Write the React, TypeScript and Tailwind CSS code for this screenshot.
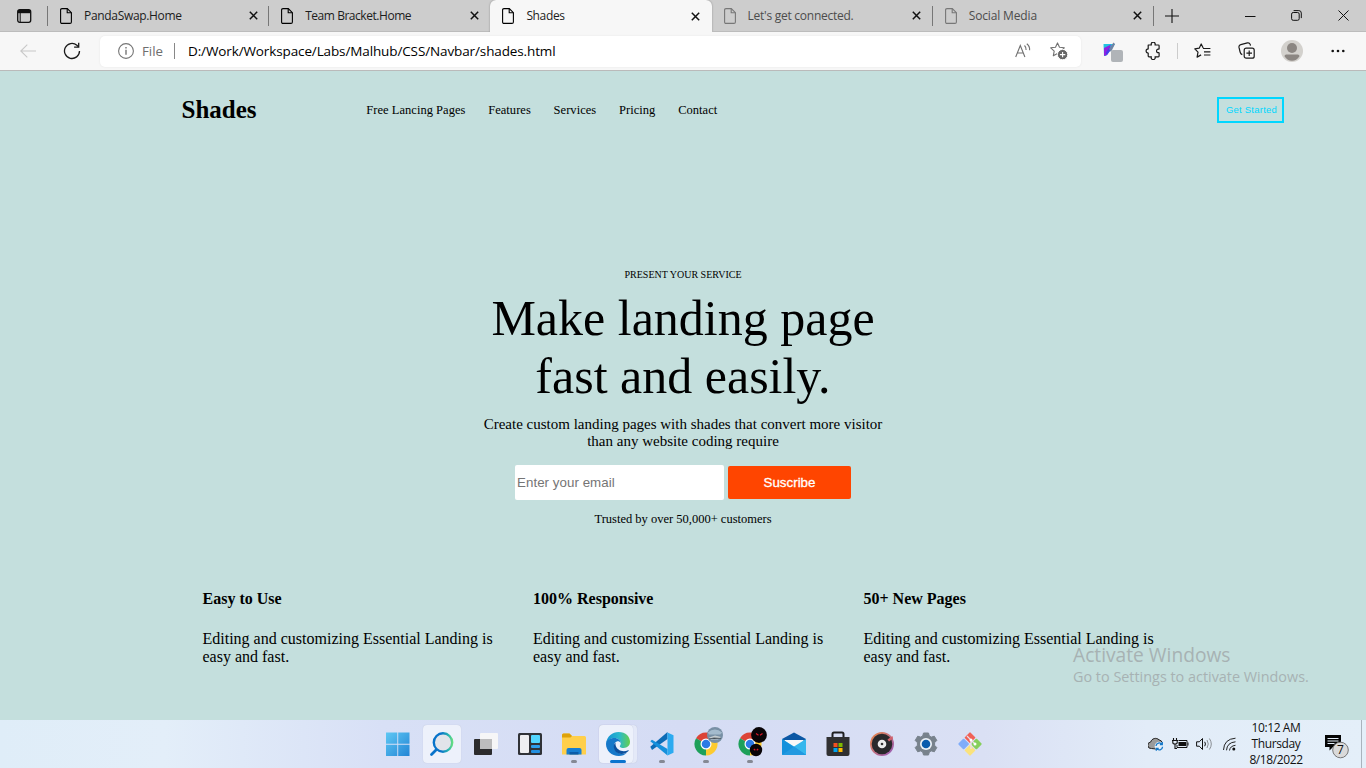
import type { ReactNode } from "react";

const UI = "font-['Open_Sans','Noto_Sans',sans-serif]";
const SERIF = "font-['Liberation_Serif',serif]";
const ARIAL = "font-['Liberation_Sans',sans-serif]";

function PageIcon() {
  return (
    <svg width="12" height="16" viewBox="0 0 12 16" fill="none" stroke="currentColor" strokeWidth="1.1">
      <path d="M2 .6h5.3l4.1 4.1V14q0 1.4-1.4 1.4H2Q.6 15.4.6 14V2Q.6.6 2 .6Z" />
      <path d="M7.2.8v4h4" />
    </svg>
  );
}

function CloseIcon() {
  return (
    <svg width="9" height="9" viewBox="0 0 9 9" stroke="#111" strokeWidth="1.5">
      <path d="m.8.8 7.4 7.4M8.2.8.8 8.2" />
    </svg>
  );
}

type TabProps = { title: string; track: string; active?: boolean; dim?: boolean; line?: boolean };

function Tab({ title, track, active, dim, line }: TabProps) {
  return (
    <div
      className={`flex h-8 w-[221.2px] shrink-0 items-center pl-[12px] pr-[11.5px] ${
        active ? "rounded-t-[6px] bg-[#f7f7f7] shadow-[0_0_2px_#888]" : "border-b border-[#bcbcbc]"
      }`}
    >
      <span className={dim ? "text-[#777]" : "text-black"}>
        <PageIcon />
      </span>
      <span className={`ml-[12px] flex-1 whitespace-nowrap text-[12px] ${track} ${dim ? "text-[#4c4c4c]" : "text-[#1c1c1c]"}`}>
        {title}
      </span>
      <CloseIcon />
      {line ? <span className="ml-[10.5px] -mr-[11.5px] h-5 w-px bg-[#777]" /> : null}
    </div>
  );
}

function TabBar() {
  return (
    <div className="flex h-8 bg-[#cdcdcd]">
      <div className="flex w-12 shrink-0 items-center border-b border-[#bcbcbc] pl-[17px]">
        <svg width="15" height="14" viewBox="0 0 15 14">
          <rect x=".7" y=".7" width="13" height="12.6" rx="2" fill="none" stroke="#111" strokeWidth="1.3" />
          <path d="M1 1h12.6v3.2H1Z" fill="#111" />
          <path d="M3.2 4v9" stroke="#111" strokeWidth="1" />
        </svg>
        <span className="ml-[15px] h-5 w-px bg-[#777]" />
      </div>
      <Tab title="PandaSwap.Home" track="tracking-[-0.32px]" line />
      <Tab title="Team Bracket.Home" track="tracking-[-0.46px]" />
      <Tab title="Shades" track="tracking-[-0.35px]" active />
      <Tab title="Let's get connected." track="tracking-[-0.26px]" dim line />
      <Tab title="Social Media" track="tracking-[-0.15px]" dim line />
      <div className="flex flex-1 items-center border-b border-[#bcbcbc] pl-[11px]">
        <svg width="14" height="14" viewBox="0 0 14 14" stroke="#111" strokeWidth="1.1">
          <path d="M7 0v14M0 7h14" />
        </svg>
        <svg className="ml-[66px]" width="11" height="10" viewBox="0 0 11 10" stroke="#111">
          <path d="M0 5.5h10.5" />
        </svg>
        <svg className="ml-[35px]" width="11" height="11" viewBox="0 0 11 11" fill="none" stroke="#111">
          <rect x=".6" y="2.5" width="7.6" height="7.8" rx="1.6" />
          <path d="M2.6.6h5.2q2.5 0 2.5 2.5v5" />
        </svg>
        <svg className="ml-[36px]" width="11" height="11" viewBox="0 0 11 11" stroke="#111">
          <path d="m.5.5 10 10M10.5.5l-10 10" />
        </svg>
      </div>
    </div>
  );
}

const STAR = "M7.5.9 9.5 5.2l4.8.6-3.5 3.3.9 4.7-4.2-2.3-4.2 2.3.9-4.7L.7 5.8l4.8-.6Z";

function Toolbar() {
  return (
    <div className="flex h-[39px] items-center border-b border-[#bababa] bg-[#f7f7f7]">
      <svg className="ml-[20px]" width="16" height="14" viewBox="0 0 16 14" fill="none" stroke="#c8c8c8" strokeWidth="1.1">
        <path d="M16 7H1M7.3.6.8 7l6.5 6.4" />
      </svg>
      <svg className="ml-[27px]" width="18" height="18" viewBox="0 0 18 18" fill="none" stroke="#1a1a1a" strokeWidth="1.3">
        <path d="M16.5 9a7.5 7.5 0 1 1-2.6-5.7l1.6 1.6" />
        <path d="M15.7.8v4.4h-4.6" />
      </svg>
      <div className="ml-[19px] flex h-[31px] w-[981px] shrink-0 items-center rounded-[5px] bg-white pl-[18px] shadow-[0_0_2px_#e3e3e3]">
        <svg width="16" height="16" viewBox="0 0 16 16" fill="none" stroke="#757575" strokeWidth="1.1">
          <circle cx="8" cy="8" r="7.4" />
          <path d="M8 6.8v5" strokeWidth="1.4" />
          <path d="M8 3.9v1.5" strokeWidth="1.4" />
        </svg>
        <span className="ml-[8px] w-[32px] pt-px text-[13.3px] text-[#6e6e6e]">File</span>
        <span className="h-4 w-px bg-[#888]" />
        <span className="ml-[13px] flex-1 whitespace-nowrap pt-px text-[13.5px] tracking-[-0.12px] text-black">
          D:/Work/Workspace/Labs/Malhub/CSS/Navbar/shades.html
        </span>
        <svg width="16" height="16" viewBox="0 0 16 16" fill="none" stroke="#707070" strokeWidth="1.1">
          <path d="M.7 14 5.3 2.5 9.900 14M2.400 10h5.800" />
          <path d="M9.500 2.500q1.800 1.800 1.600 4.500M11.800.8q3.200 2.600 2.800 6.400" />
        </svg>
        <svg className="ml-[19px] mr-[13px]" width="18" height="18" viewBox="0 0 18 18" fill="none">
          <path d={STAR} stroke="#707070" strokeWidth="1.1" strokeLinejoin="round" />
          <circle cx="12.6" cy="12.6" r="5.2" fill="#666" stroke="#fff" />
          <path d="M12.6 9.9v5.4M9.9 12.6h5.4" stroke="#fff" strokeWidth="1.1" />
        </svg>
      </div>
      <svg className="ml-[21px] mt-[4px]" width="22" height="22" viewBox="0 0 22 22">
        <path d="M1.500 2h11.500L9 8l-5 6H2Z" fill="#20c4e0" />
        <path d="m2 6 7-3.500L5 13l-3 1Z" fill="#9022e0" />
        <path d="m3.500 11 4-6 2.500 1-5 7Z" fill="#4b38ed" />
        <path d="m7 7 4.500-6.500 1.500 1.500L9 10Z" fill="#7083a3" />
        <rect x="9" y="8" width="12" height="12" rx="2" fill="#b0b4b8" />
      </svg>
      <svg className="ml-[21px]" width="16" height="18" viewBox="0 0 16 18" fill="none" stroke="#1a1a1a" strokeWidth="1.2" strokeLinejoin="round">
        <path d="M3.200 3h3.200a2 2 0 1 1 3.600 0h3.300q.8 0 .8.800v2.900a.5.500 0 0 1-.6.500c-2.600-.5-2.600 3.900 0 3.400a.5.500 0 0 1 .6.500v2.900q0 .8-.8.800h-3.300a2 2 0 1 1-3.600 0H4q-.8 0-.8-.8v-2.900a2.100 2.100 0 1 1 0-4.200Z" />
      </svg>
      <span className="ml-[16px] h-4 w-px bg-[#ccc]" />
      <svg className="ml-[16px]" width="17" height="16" viewBox="0 0 17 16" fill="none" stroke="#1a1a1a" strokeWidth="1.2" strokeLinejoin="round">
        <path d="M9.200 5 7.200 1 5.200 5.200.8 5.900 4 9.100l-.9 5 4-2.200" />
        <path d="M9 5.500h7.400M10 8.800h6.400M10 12h6.400" />
      </svg>
      <svg className="ml-[27px]" width="18" height="18" viewBox="0 0 18 18" fill="none" stroke="#1a1a1a" strokeWidth="1.2">
        <rect x="6.200" y="6.200" width="10" height="10" rx="2" />
        <path d="M11.200 8.400v5.600M8.400 11.200H14M4.300 12.600Q2.600 12 2.100 10L1 5.400q-.4-2.100 1.800-2.700l6.600-1.800q2.100-.4 2.800 1.500l.3 1.200" />
      </svg>
      <svg className="ml-[25px]" width="22" height="22" viewBox="0 0 22 22">
        <circle cx="11" cy="11" r="11" fill="#d3d1cd" />
        <circle cx="11" cy="8" r="5" fill="#8b8682" />
        <path d="M3.500 16.300Q3.500 14.500 5.300 14.500H16.700Q18.500 14.500 18.500 16.300Q15.500 20.800 11 20.800T3.500 16.300Z" fill="#8b8682" />
      </svg>
      <svg className="ml-[28px]" width="14" height="4" viewBox="0 0 14 4" fill="#111">
        <circle cx="1.700" cy="2" r="1.300" />
        <circle cx="7" cy="2" r="1.300" />
        <circle cx="12.300" cy="2" r="1.300" />
      </svg>
    </div>
  );
}

const FEATURES = ["Easy to Use", "100% Responsive", "50+ New Pages"];

function Page() {
  return (
    <main className={`flex h-[649px] flex-col bg-[#c4dfdd] text-black ${SERIF}`}>
      <nav className="flex h-[78px] items-center pl-[181.5px] pr-[82px]">
        <span className="w-[184.8px] text-[25px] font-bold leading-[28px]">Shades</span>
        <div className="flex flex-1 gap-[22.8px] whitespace-nowrap text-[12.5px] leading-[14px] tracking-[0.03px]">
          <a>Free Lancing Pages</a>
          <a>Features</a>
          <a>Services</a>
          <a>Pricing</a>
          <a>Contact</a>
        </div>
        <button className={`h-[26px] w-[67px] whitespace-nowrap border-2 border-[#00d7ff] pl-[2px] text-[9.5px] leading-none tracking-[0.24px] text-[#00d7ff] ${ARIAL}`}>
          Get Started
        </button>
      </nav>
      <section className="mt-[120px] flex flex-col items-center text-center">
        <p className="text-[10px] leading-[11px]">PRESENT YOUR SERVICE</p>
        <h1 className="mt-[9px] text-[50px] leading-[58px]">
          Make landing page
          <br />
          fast and easily.
        </h1>
        <p className="mt-[11px] text-[15px] leading-[17px]">
          Create custom landing pages with shades that convert more visitor
          <br />
          than any website coding require
        </p>
        <div className={`mt-[15px] flex items-center gap-1 ${ARIAL}`}>
          <input
            className="h-[35px] w-[209px] rounded-[2px] bg-white pl-[2px] text-[13.333px] tracking-[0.04px] placeholder:text-[#757575]"
            placeholder="Enter your email"
          />
          <button className="h-[33px] w-[123px] rounded-[2px] bg-[#ff4500] text-[13.333px] text-white [-webkit-text-stroke:0.3px_white]">
            Suscribe
          </button>
        </div>
        <p className="mt-[12px] text-[12.5px] leading-[14px]">Trusted by over 50,000+ customers</p>
      </section>
      <section className="mt-[64px] flex pl-[202.5px] text-[16px] leading-[18px]">
        {FEATURES.map((title) => (
          <div key={title} className="w-[330.5px]">
            <h3 className="font-bold">{title}</h3>
            <p className="mt-[22px] whitespace-nowrap">
              Editing and customizing Essential Landing is
              <br />
              easy and fast.
            </p>
          </div>
        ))}
      </section>
    </main>
  );
}

function Slot({ children, dot, boxed }: { children: ReactNode; dot?: boolean; boxed?: boolean }) {
  return (
    <div
      className={`relative mx-[3px] flex h-[38px] w-[38px] shrink-0 items-center justify-center rounded-[4px] ${
        boxed ? "bg-[#edf1fb] shadow-[0_0_1px_#b5bbcf]" : ""
      }`}
    >
      {children}
      {dot ? <span className="absolute bottom-0 left-[16px] h-[3px] w-[6px] rounded-full bg-[#858994]" /> : null}
    </div>
  );
}

function ChromeMark() {
  return (
    <>
      <path d="M12 17 2.040 11.250A11.500 11.500 0 0 1 21.960 11.250Z" fill="#dc4437" />
      <path d="M12 17 2.040 11.250A11.500 11.500 0 0 0 12 28.500Z" fill="#1da05a" />
      <path d="M12 17 12 28.500A11.500 11.500 0 0 0 21.960 11.250Z" fill="#fdcb2f" />
      <circle cx="12" cy="17" r="5.500" fill="#fff" />
      <circle cx="12" cy="17" r="4.300" fill="#2c7be5" />
    </>
  );
}

function Taskbar() {
  return (
    <footer className="flex h-12 items-center bg-[linear-gradient(90deg,#dfedf8_0%,#e3eef9_12%,#d8e0f6_28%,#d5dcf4_50%,#dae0f4_72%,#e2ecf8_84%,#e4eff9_100%)]">
      <div className="flex w-[1148px] pl-[376px]">
        <Slot>
          <svg width="24" height="24" viewBox="0 0 24 24">
            <defs>
              <linearGradient id="win" x2="1" y2="1" gradientUnits="objectBoundingBox">
                <stop stopColor="#5fc8f4" />
                <stop offset="1" stopColor="#2385d5" />
              </linearGradient>
            </defs>
            <path d="M0 .500h11.300v11.300H0Zm12.200 0h11.300v11.300h-11.300Zm-12.200 12.200h11.300V24H0Zm12.200 0h11.300V24h-11.300Z" fill="url(#win)" />
          </svg>
        </Slot>
        <Slot boxed>
          <svg width="26" height="26" viewBox="0 0 26 26" fill="none">
            <defs>
              <linearGradient id="lens" x2="1">
                <stop offset=".4" stopColor="#0873ca" />
                <stop offset=".8" stopColor="#29b6b0" />
                <stop offset="1" stopColor="#64dc82" />
              </linearGradient>
            </defs>
            <path d="m8.500 17.500-6 6" stroke="#0873ca" strokeWidth="2.800" strokeLinecap="round" />
            <circle cx="14" cy="11.500" r="9.200" fill="#e2e4ea" stroke="url(#lens)" strokeWidth="2.400" />
          </svg>
        </Slot>
        <Slot>
          <svg width="24" height="24" viewBox="0 0 24 24">
            <rect x="0" y="7" width="18" height="16" rx="1" fill="#2b2b2d" />
            <rect x="6" y="1" width="18" height="16" rx="1" fill="#f6f6f7" />
            <path d="M6 7h12v10H6Z" fill="#bcbcbd" />
          </svg>
        </Slot>
        <Slot>
          <svg width="24" height="24" viewBox="0 0 24 24">
            <rect y="1" width="24" height="22" rx="1.500" fill="#303237" />
            <rect x="2" y="3" width="9" height="18" rx="1" fill="#eeeef0" />
            <rect x="13" y="3" width="9" height="8" rx="1" fill="#52d5ff" />
            <rect x="13" y="13" width="9" height="3" rx="1" fill="#2d9deb" />
            <rect x="13" y="18" width="9" height="3" rx="1" fill="#2490df" />
          </svg>
        </Slot>
        <Slot dot>
          <svg width="24" height="24" viewBox="0 0 24 24">
            <path d="M0 3q0-1.500 1.500-1.500h6L10 4H22.500Q24 4 24 5.500V22.500H0Z" fill="#ffcf4b" />
            <path d="M0 5V3q0-1.500 1.500-1.500h6L10 4 8.500 5.500H0Z" fill="#dea20b" />
            <path d="M4.500 22.500V18q0-2 2-2h11q2 0 2 2v4.500Z" fill="#167ed1" />
            <path d="M7.500 20h9v2.500h-9Z" fill="#0b5ca8" />
          </svg>
        </Slot>
        <div className="mx-[3px] flex h-[38px] w-[38px] shrink-0 rounded-[4px] bg-[#e4e9f8] shadow-[0_0_1px_#b5bbcf]">
          <div className="relative flex h-[38px] w-[34px] shrink-0 items-center rounded-[4px] bg-[#edf1fb] pl-[7px] shadow-[0_0_1px_#b5bbcf]">
            <svg className="shrink-0" width="24" height="24" viewBox="0 0 24 24">
              <defs>
                <linearGradient id="edgeTop" x2="1">
                  <stop stopColor="#1491d5" />
                  <stop offset=".55" stopColor="#2ab9cc" />
                  <stop offset="1" stopColor="#66cf4c" />
                </linearGradient>
              </defs>
              <path d="M0 11.500C1 4 6.500 0 12.500 0 20 0 24 5 24 9.800c0 4-3 6.200-6.200 6.200-2.500 0-4-.8-4-1.800 0-.8 1-1.200 1-3C14.800 8.500 12 6 8.500 6 4.500 6 1.500 8.500 0 11.500Z" fill="url(#edgeTop)" />
              <path d="M0 12c0-3.500 4-6 8.500-6 3.500 0 6.300 2.500 6.300 5-1-1.500-2.600-2-4-1.500-4 1.500-3.500 7.500.2 10.500 3.500 2.800 7.500 2 10.300.2-2.400 2.800-5.300 3.800-8.500 3.800C5.500 24 0 18.500 0 12Z" fill="#1678c9" />
              <path d="M9.500 10.500c-3.200 3-1.600 8.300 1.800 10.300 4 2.300 8 1 11.200-1.800.5-.5.2-1-.4-.7-5.600 2.500-12-.5-12.600-5.800Z" fill="#0c509d" />
            </svg>
            <span className="absolute bottom-0 left-[11px] h-[3px] w-4 rounded-full bg-[#0a74cf]" />
          </div>
        </div>
        <Slot dot>
          <svg width="24" height="24" viewBox="0 0 24 24">
            <path d="M.3 14.800 17.500 0v7L2 18Z" fill="#0d6cb6" />
            <path d="M.3 9.200 2 7.800 17.500 17v6.500Z" fill="#1590dc" />
            <path d="m17.500.500 6 2.700v17.600l-6 2.700Z" fill="#2caaf0" />
          </svg>
        </Slot>
        <Slot dot>
          <svg className="mb-[4px] ml-[6px] shrink-0" width="30" height="30" viewBox="0 0 30 30">
            <ChromeMark />
            <circle cx="21" cy="8" r="8" fill="#7890a5" />
            <path d="M13.800 5.500q7-6 14.400 0l-2 2H15Z" fill="#a4bbcd" />
            <path d="m15 10.500 6-2 6 1.500-3 2.500H17Z" fill="#c5cccf" />
            <path d="m15 12 5-1 7 .5" stroke="#56626d" />
          </svg>
        </Slot>
        <Slot dot>
          <svg className="mb-[4px] ml-[6px] shrink-0" width="30" height="30" viewBox="0 0 30 30">
            <ChromeMark />
            <circle cx="21" cy="8" r="7.900" fill="#090407" />
            <circle cx="18" cy="23" r="6.200" fill="#090407" />
            <path d="m18 6.500 2.500 1.700M24.500 6.500l-2.500 1.700M15.800 22l1.500 1.200M20.200 22l-1.500 1.200" stroke="#d81728" strokeWidth="1.200" />
          </svg>
        </Slot>
        <Slot>
          <svg width="24" height="24" viewBox="0 0 24 24">
            <path d="M0 7 12 .500 24 7v5H0Z" fill="#0b57a4" />
            <path d="M2.500 8h19v7h-19Z" fill="#f8f8f8" />
            <path d="M0 7v16h24V7L12 14.500Z" fill="#35b7ed" />
            <path d="M0 7 24 23H1.500Q0 23 0 21.500Z" fill="#1491dc" />
            <path d="M0 23 12 14.500 24 23Z" fill="#2299e0" />
          </svg>
        </Slot>
        <Slot>
          <svg width="24" height="26" viewBox="0 0 24 26">
            <path d="M6.500 8V3Q6.500 1.500 8 1.500h8q1.500 0 1.500 1.500v5" fill="none" stroke="#1f1f20" strokeWidth="2" />
            <path d="M.5 6h23v17q0 2-2 2h-19q-2 0-2-2Z" fill="#303031" />
            <path d="M7.500 12h4v4h-4Z" fill="#f25022" />
            <path d="M12.500 12h4v4h-4Z" fill="#7fba00" />
            <path d="M7.500 17h4v4h-4Z" fill="#00a4ef" />
            <path d="M12.500 17h4v4h-4Z" fill="#ffb900" />
          </svg>
        </Slot>
        <Slot>
          <svg width="24" height="24" viewBox="0 0 24 24">
            <defs>
              <linearGradient id="disc" y2="1">
                <stop stopColor="#ed8843" />
                <stop offset="1" stopColor="#9259bf" />
              </linearGradient>
            </defs>
            <circle cx="12" cy="12" r="12" fill="url(#disc)" />
            <circle cx="12" cy="12" r="10.300" fill="#29292b" />
            <circle cx="12" cy="12" r="4.300" fill="#ececec" />
            <circle cx="12" cy="12" r="1.300" fill="#333" />
            <path d="m17.500 7.500 5-3.500.5 2.500-4 3Z" fill="#d1616b" />
          </svg>
        </Slot>
        <Slot>
          <svg width="24" height="24" viewBox="0 0 24 24">
            <path d="m9.500 1 5 0 .8 3 2 1.100 3-.9 2.500 4.200-2.200 2.300v2.600l2.200 2.300-2.500 4.200-3-.9-2 1.100-.8 3h-5l-.8-3-2-1.100-3 .9-2.500-4.200 2.200-2.300v-2.600L1.200 8.400l2.500-4.200 3 .9 2-1.100Z" fill="#78828c" stroke="#78828c" strokeLinejoin="round" />
            <circle cx="12" cy="12" r="6" fill="#edf2f7" />
            <circle cx="12" cy="12" r="4.300" fill="#0a5cad" />
          </svg>
        </Slot>
        <Slot>
          <svg width="24" height="24" viewBox="0 0 24 24">
            <g transform="rotate(45 12 12)">
              <rect x="3.500" y="3.500" width="8" height="8" rx="1" fill="#f06156" />
              <rect x="12.500" y="3.500" width="8" height="8" rx="1" fill="#86cf5c" />
              <rect x="3.500" y="12.500" width="8" height="8" rx="1" fill="#80adfa" />
              <rect x="12.500" y="12.500" width="8" height="8" rx="1" fill="#fae27d" />
            </g>
            <path d="m9 4 4 4v9M13 8l4 4" stroke="#e9dfee" strokeWidth="1.200" fill="none" />
            <circle cx="13" cy="8" r="1.500" fill="#fff" />
            <circle cx="17" cy="12" r="1.500" fill="#fff" />
          </svg>
        </Slot>
      </div>
      <svg width="16" height="14" viewBox="0 0 16 14">
        <path d="M3.500 11.500A3.200 3.200 0 0 1 2.700 5 5 5 0 0 1 11 2.800a4 4 0 0 1 3.300 3.700L8 12Z" fill="#9b9b9b" stroke="#222" />
        <circle cx="11.300" cy="9.300" r="4.600" fill="#e4eff9" />
        <path d="M8 9a3.300 3.300 0 0 1 6-1.700M14.600 9.800a3.300 3.300 0 0 1-6 1.700M14.300 5v2.500h-2.400M8.300 13.700v-2.400h2.400" stroke="#1478c9" strokeWidth="1.300" fill="none" />
      </svg>
      <svg className="ml-[8px]" width="17" height="12" viewBox="0 0 17 12">
        <path d="M1.500 0v2M4.500 0v2M0 2.500h6M.8 3v1.500Q.8 6 3 6t2.200-1.500V3M3 6v4.500h2" fill="none" stroke="#111" strokeWidth="1.100" />
        <path d="M6.500 2.500h8.500v7h-10V7M16 4.500V7.500" fill="none" stroke="#111" />
        <path d="M6.500 4h7.500v4H6.500Z" fill="#111" />
      </svg>
      <svg className="ml-[7px]" width="17" height="14" viewBox="0 0 17 14" fill="none" stroke="#111">
        <path d="M.6 4.800h2.700L6.500 1.500v11L3.300 9.200H.6Z" />
        <path d="M8.700 4.800q1.500 2.200 0 4.400" />
        <path d="M11 3q2.600 4 0 8M13.400 1.500q3.800 5.500 0 11" stroke="#8a8f94" />
      </svg>
      <svg className="ml-[10px]" width="13" height="14" viewBox="0 0 13 14" fill="none" stroke="#222">
        <path d="M.5 13Q1 2 12.500 1.200M3.500 13.300Q4 5.500 12.500 4.800M6.500 13.500Q7 9 12.500 8.300" />
        <circle cx="10.800" cy="12" r="1.500" fill="#111" stroke="none" />
      </svg>
      <div className="ml-[9px] flex w-[62px] flex-col items-center whitespace-nowrap text-[12px] leading-4 tracking-[-0.4px] text-[#111]">
        <span>10:12 AM</span>
        <span>Thursday</span>
        <span>8/18/2022</span>
      </div>
      <svg className="ml-[17px] mt-[4px]" width="26" height="26" viewBox="0 0 26 26">
        <path d="M1 2h16v12h-8l-3.500 3.500V14H1Z" fill="#050505" />
        <path d="M3.500 5.500h11M3.500 8h11M3.500 10.500h7" stroke="#e4eff9" />
        <circle cx="16.500" cy="17" r="7.800" fill="#dadada" stroke="#777" />
        <text x="16.500" y="21.300" textAnchor="middle" fontSize="12" fill="#111" className={UI}>
          7
        </text>
      </svg>
      <span className="ml-auto mr-[4px] h-12 w-px bg-[#a9b3bd]" />
    </footer>
  );
}

export default function App() {
  return (
    <div className={`relative flex h-[768px] w-[1366px] flex-col overflow-hidden ${UI}`}>
      <TabBar />
      <Toolbar />
      <Page />
      <Taskbar />
      <div className="pointer-events-none absolute left-[1073px] top-[643px] whitespace-nowrap text-[#a7b2b3]">
        <p className="text-[19.2px] leading-[24px]">Activate Windows</p>
        <p className="text-[14.4px] leading-[20px]">Go to Settings to activate Windows.</p>
      </div>
    </div>
  );
}
